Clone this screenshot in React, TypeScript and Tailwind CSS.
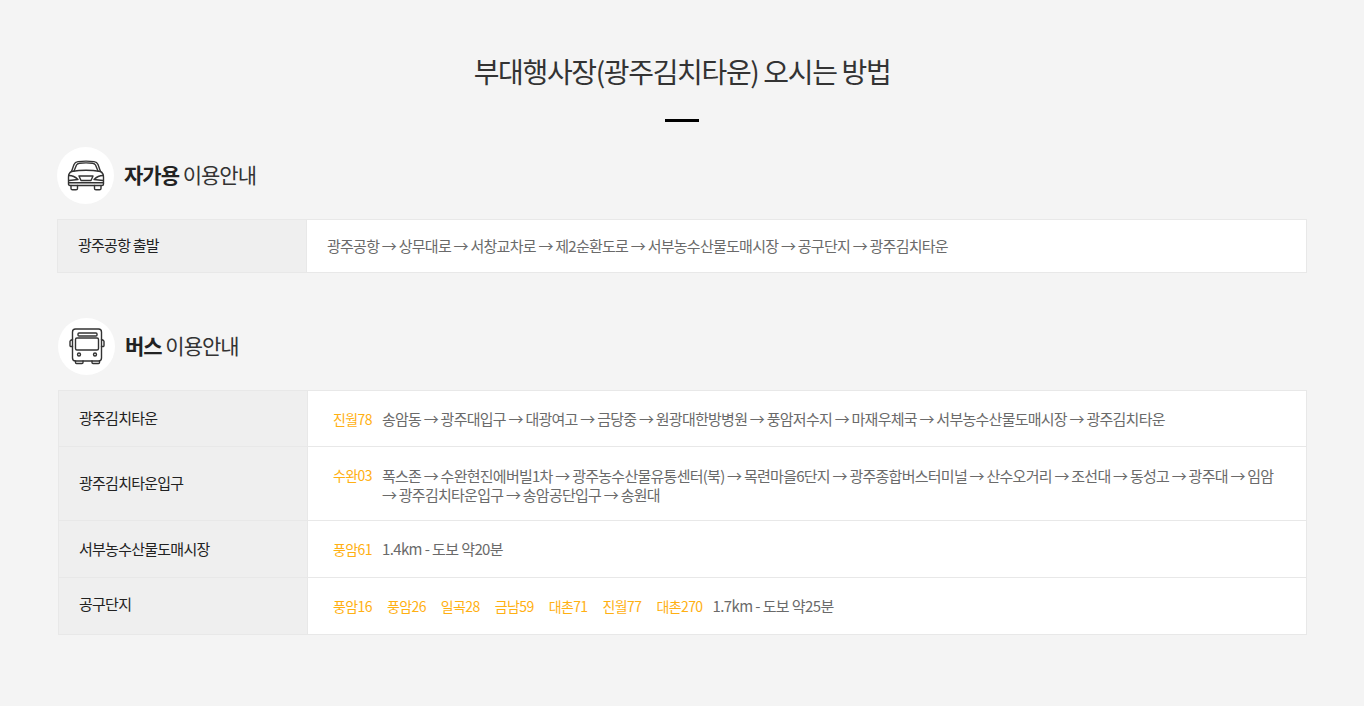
import React from 'react'

function CarIcon() {
  return (
    <svg width="38" height="32" viewBox="0 0 38 32" fill="none" stroke="#333" strokeWidth="1.4" strokeLinecap="round" strokeLinejoin="round">
      <path d="M4.500 11.500 L7 4.500 Q8 2 11 1.600 Q19 0.600 27 1.600 Q30 2 31 4.500 L33.500 11.500" />
      <path d="M7 11 L9.500 5 Q10.300 3.400 12.500 3.200 Q19 2.500 25.500 3.200 Q27.700 3.400 28.500 5 L31 11" />
      <path d="M4.500 11.500 Q19 9 33.500 11.500 Q36.500 13 36.500 17 L36.500 24 Q36.500 25.500 35 25.500 L3 25.500 Q1.500 25.500 1.500 24 L1.500 17 Q1.500 13 4.500 11.500 Z" />
      <path d="M2 15.500 Q7 15.500 11 19.500 L2 20.500" />
      <path d="M36 15.500 Q31 15.500 27 19.500 L36 20.500" />
      <path d="M12 16 L26 16 L24 20.500 L14 20.500 Z" />
      <path d="M2 22.800 L36 22.800" />
      <path d="M4 25.500 L4 28.500 Q4 29.800 5.500 29.800 L9 29.800 Q10.500 29.800 10.500 28.500 L10.500 25.500" />
      <path d="M27.500 25.500 L27.500 28.500 Q27.500 29.800 29 29.800 L32.500 29.800 Q34 29.800 34 28.500 L34 25.500" />
    </svg>
  )
}

function BusIcon() {
  return (
    <svg width="36" height="37" viewBox="0 0 36 37" fill="none" stroke="#333" strokeWidth="1.4" strokeLinecap="round" strokeLinejoin="round">
      <rect x="3.500" y="1" width="29" height="32" rx="3" />
      <rect x="9" y="5" width="19" height="3" rx="1" />
      <rect x="6.500" y="10" width="23" height="12" rx="1.500" />
      <path d="M3.500 11.500 L1.500 12.500 Q1 12.800 1 13.500 L1 17.500 Q1 18.200 1.500 18.500 L3.500 18.500" />
      <path d="M32.500 11.500 L34.500 12.500 Q35 12.800 35 13.500 L35 17.500 Q35 18.200 34.500 18.500 L32.500 18.500" />
      <circle cx="10" cy="26.500" r="1.500" />
      <circle cx="26" cy="26.500" r="1.500" />
      <path d="M6.500 33 L6.500 34.500 Q6.500 35.500 7.500 35.500 L13 35.500 Q14 35.500 14 34.500 L14 33" />
      <path d="M23 33 L23 34.500 Q23 35.500 24 35.500 L29.500 35.500 Q30.500 35.500 30.500 34.500 L30.500 33" />
    </svg>
  )
}

function Heading({ icon, bold, className }: { icon: React.ReactNode; bold: string; className: string }) {
  return (
    <div className={`flex items-center ${className}`}>
      <div className="w-[57px] h-[57px] rounded-full bg-white flex items-center justify-center">{icon}</div>
      <h3 className="ml-[10px] text-[21px] leading-[30px] tracking-[-1px] text-[#333] -mt-[4px]">
        <b className="font-bold text-[#222]">{bold}</b> 이용안내
      </h3>
    </div>
  )
}

function Bus({ children, last }: { children: React.ReactNode; last?: boolean }) {
  return <span className={`shrink-0 text-[14px] tracking-[-0.6px] text-[#ffb012] ${last ? 'mr-[10px]' : 'mr-[15px]'}`}>{children}</span>
}

function Row({ title, h, children, first, labelPad = 'pb-[1px]' }: { title: string; h: string; children: React.ReactNode; first?: boolean; labelPad?: string }) {
  return (
    <div className={`flex ${h} ${first ? '' : 'border-t border-[#e8e8e8]'}`}>
      <div className={`w-[249px] shrink-0 bg-[#efefef] border-r border-[#e8e8e8] pl-[20px] flex items-center text-[15px] tracking-[-0.75px] text-[#222] ${labelPad}`}>
        {title}
      </div>
      <div className="flex-1 bg-white text-[15px] leading-[20px] tracking-[-0.74px] text-[#6a6a6a]">{children}</div>
    </div>
  )
}

export default function App() {
  return (
    <div
      className="min-h-[706px] bg-[#f4f4f4] pt-[46px]"
      style={{ fontFamily: '"Noto Sans CJK KR", "Noto Sans", sans-serif' }}
    >
      <h2 className="text-center text-[28px] leading-[50px] tracking-[-1.35px] text-[#333]">부대행사장(광주김치타운) 오시는 방법</h2>
      <div className="w-[34px] h-[3px] bg-black mx-auto mt-[23px]"></div>

      <Heading icon={<CarIcon />} bold="자가용" className="ml-[57px] mt-[25px]" />
      <div className="ml-[57px] mr-[57px] mt-[15px] border border-[#e8e8e8]">
        <Row title="광주공항 출발" h="h-[52px]" first>
          <div className="pl-[20px] pt-[16px]">광주공항 → 상무대로 → 서창교차로 → 제2순환도로 → 서부농수산물도매시장 → 공구단지 → 광주김치타운</div>
        </Row>
      </div>

      <Heading icon={<BusIcon />} bold="버스" className="ml-[58px] mt-[45px]" />
      <div className="ml-[58px] mr-[57px] mt-[15px] border border-[#e8e8e8]">
        <Row title="광주김치타운" h="h-[55px]" first>
          <div className="flex pl-[25px] pt-[18px]">
            <Bus last>진월78</Bus>
            <span>송암동 → 광주대입구 → 대광여고 → 금당중 → 원광대한방병원 → 풍암저수지 → 마재우체국 → 서부농수산물도매시장 → 광주김치타운</span>
          </div>
        </Row>
        <Row title="광주김치타운입구" h="h-[74px]">
          <div className="flex pl-[25px] pr-[25px] pt-[19px] leading-[19px]">
            <Bus last>수완03</Bus>
            <span>폭스존 → 수완현진에버빌1차 → 광주농수산물유통센터(북) → 목련마을6단지 → 광주종합버스터미널 → 산수오거리 → 조선대 → 동성고 → 광주대 → 임암 → 광주김치타운입구 → 송암공단입구 → 송원대</span>
          </div>
        </Row>
        <Row title="서부농수산물도매시장" h="h-[57px]" labelPad="pb-0">
          <div className="flex pl-[25px] pt-[18px]">
            <Bus last>풍암61</Bus>
            <span className="tracking-[-0.6px]">1.4km - 도보 약20분</span>
          </div>
        </Row>
        <Row title="공구단지" h="h-[57px]" labelPad="pb-[3px]">
          <div className="flex pl-[25px] pt-[18px]">
            <Bus>풍암16</Bus>
            <Bus>풍암26</Bus>
            <Bus>일곡28</Bus>
            <Bus>금남59</Bus>
            <Bus>대촌71</Bus>
            <Bus>진월77</Bus>
            <Bus last>대촌270</Bus>
            <span className="tracking-[-0.6px]">1.7km - 도보 약25분</span>
          </div>
        </Row>
      </div>
    </div>
  )
}
